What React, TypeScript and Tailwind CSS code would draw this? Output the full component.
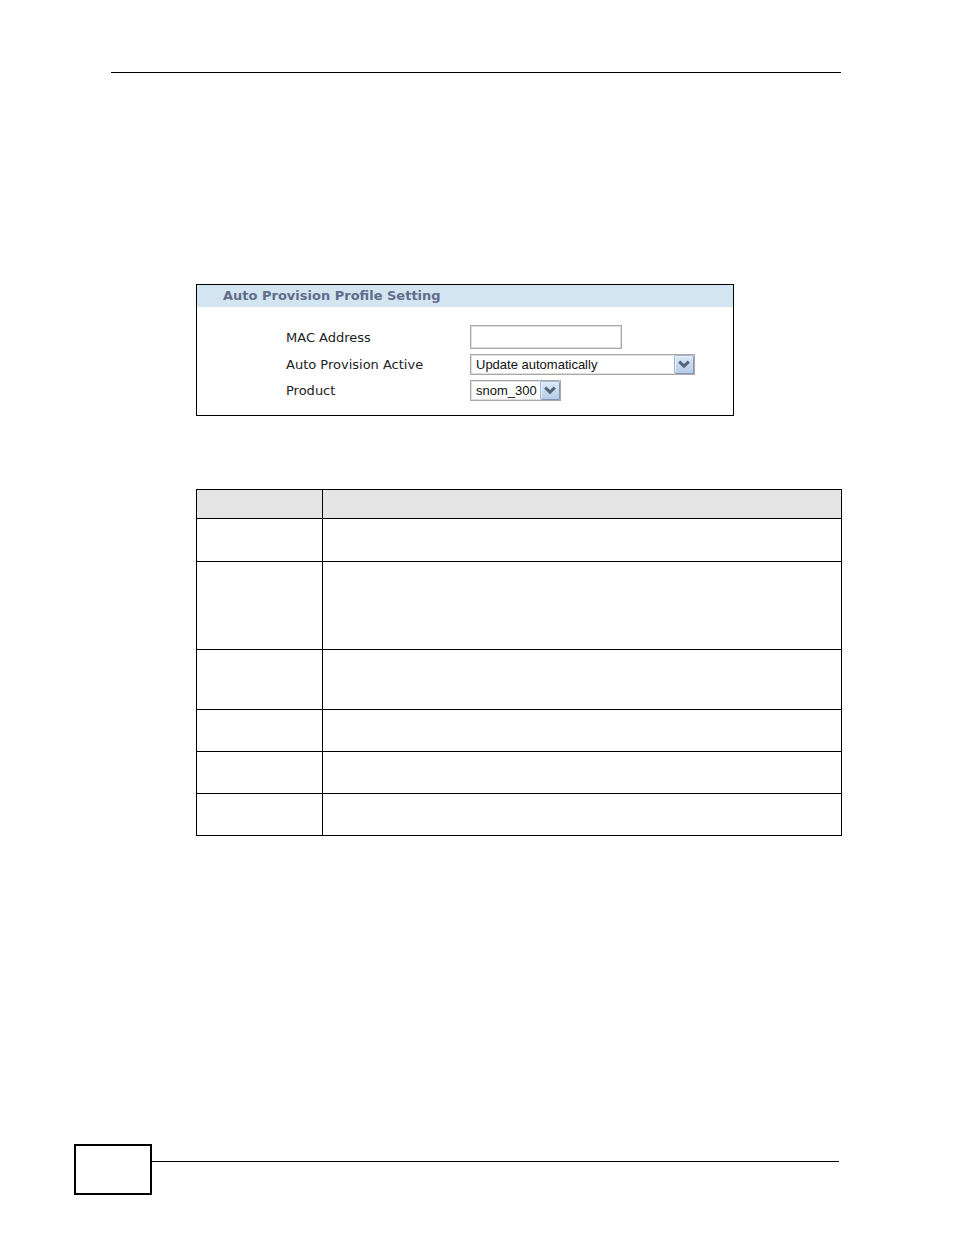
import type { SelectHTMLAttributes } from "react";
import clsx from "clsx";

interface TableRow {
  id: string;
  height: string;
}

const rows: TableRow[] = [
  { id: "mac", height: "h-[43px]" },
  { id: "active", height: "h-[88px]" },
  { id: "product", height: "h-[60px]" },
  { id: "apply", height: "h-[42px]" },
  { id: "reset", height: "h-[42px]" },
  { id: "cancel", height: "h-[42px]" },
];

const SelectArrow = () => (
  <svg
    viewBox="0 0 20 19"
    className="pointer-events-none absolute right-px top-px h-[19px] w-5"
    aria-hidden="true"
  >
    <defs>
      <linearGradient id="arrow-fill" x1="0" y1="0" x2="0" y2="1">
        <stop offset="0" stopColor="#dce9f9" />
        <stop offset="1" stopColor="#b4cbe8" />
      </linearGradient>
    </defs>
    <rect x="0.5" y="0.5" width="19" height="18" rx="1.5" fill="url(#arrow-fill)" stroke="#9db4d2" />
    <path d="M1.5 17V1.5H18" fill="none" stroke="#e9f2fc" />
    <path d="M19.5 2V18.5H2" fill="none" stroke="#8496b0" />
    <path d="M5.2 6.6L10 11.2L14.8 6.6" fill="none" stroke="#566477" strokeWidth="3" />
  </svg>
);

const SelectBox = ({ className, ...props }: SelectHTMLAttributes<HTMLSelectElement>) => (
  <div className={clsx("relative h-[21px]", className)}>
    <select
      {...props}
      className="block h-full w-full appearance-none border border-[#a9a9a9] bg-white pl-[5px] pr-5 font-['Liberation_Sans',Arial,sans-serif] text-[13px] leading-4 text-[#111111] shadow-[inset_0_0_0_1px_#dedede] outline-none"
    />
    <SelectArrow />
  </div>
);

const ProfileSettings = () => (
  <form className="h-[132px] w-[538px] max-w-full border border-black bg-white font-['DejaVu_Sans',Verdana,sans-serif]">
    <h2 className="h-[22px] bg-[#d3e5f0] pl-[26px] text-[13px] font-bold leading-[22px] text-[#626d8c]">
      Auto Provision Profile Setting
    </h2>
    <div className="grid grid-cols-[184px_1fr] items-center gap-y-[5px] pl-[89px] pt-[18px] text-[13px] leading-5 text-[#222222]">
      <label htmlFor="mac" className="pt-0.5">
        MAC Address
      </label>
      <input
        id="mac"
        type="text"
        className="h-6 w-[152px] border border-[#a9a9a9] bg-white px-1 shadow-[inset_0_0_0_1px_#dedede] outline-none"
      />
      <label htmlFor="active">Auto Provision Active</label>
      <SelectBox id="active" className="w-[225px]">
        <option>Update automatically</option>
      </SelectBox>
      <label htmlFor="product">Product</label>
      <SelectBox id="product" className="w-[91px]">
        <option>snom_300</option>
      </SelectBox>
    </div>
  </form>
);

const DescriptionTable = () => (
  <table className="w-full table-fixed border-collapse border border-black">
    <colgroup>
      <col className="w-[126px]" />
      <col />
    </colgroup>
    <thead>
      <tr className="h-[29px] bg-[#e5e5e5]">
        <th className="border border-black p-0" />
        <th className="border border-black p-0" />
      </tr>
    </thead>
    <tbody>
      {rows.map((row) => (
        <tr key={row.id} className={row.height}>
          <td className="border border-black p-0" />
          <td className="border border-black p-0" />
        </tr>
      ))}
    </tbody>
  </table>
);

export default function App() {
  return (
    <div className="flex min-h-screen flex-col bg-white pb-10 pt-[72px]">
      <main className="ml-[111px] mr-28">
        <hr className="mr-px border-t border-black" />
        <div className="pl-[85px] pt-[211px]">
          <ProfileSettings />
          <div className="mt-[73px]">
            <DescriptionTable />
          </div>
        </div>
      </main>
      <footer className="ml-[74px] mr-[115px] mt-auto flex items-start">
        <div className="h-[51px] w-[78px] border-2 border-black" />
        <hr className="mt-[17px] flex-1 border-t border-black" />
      </footer>
    </div>
  );
}
